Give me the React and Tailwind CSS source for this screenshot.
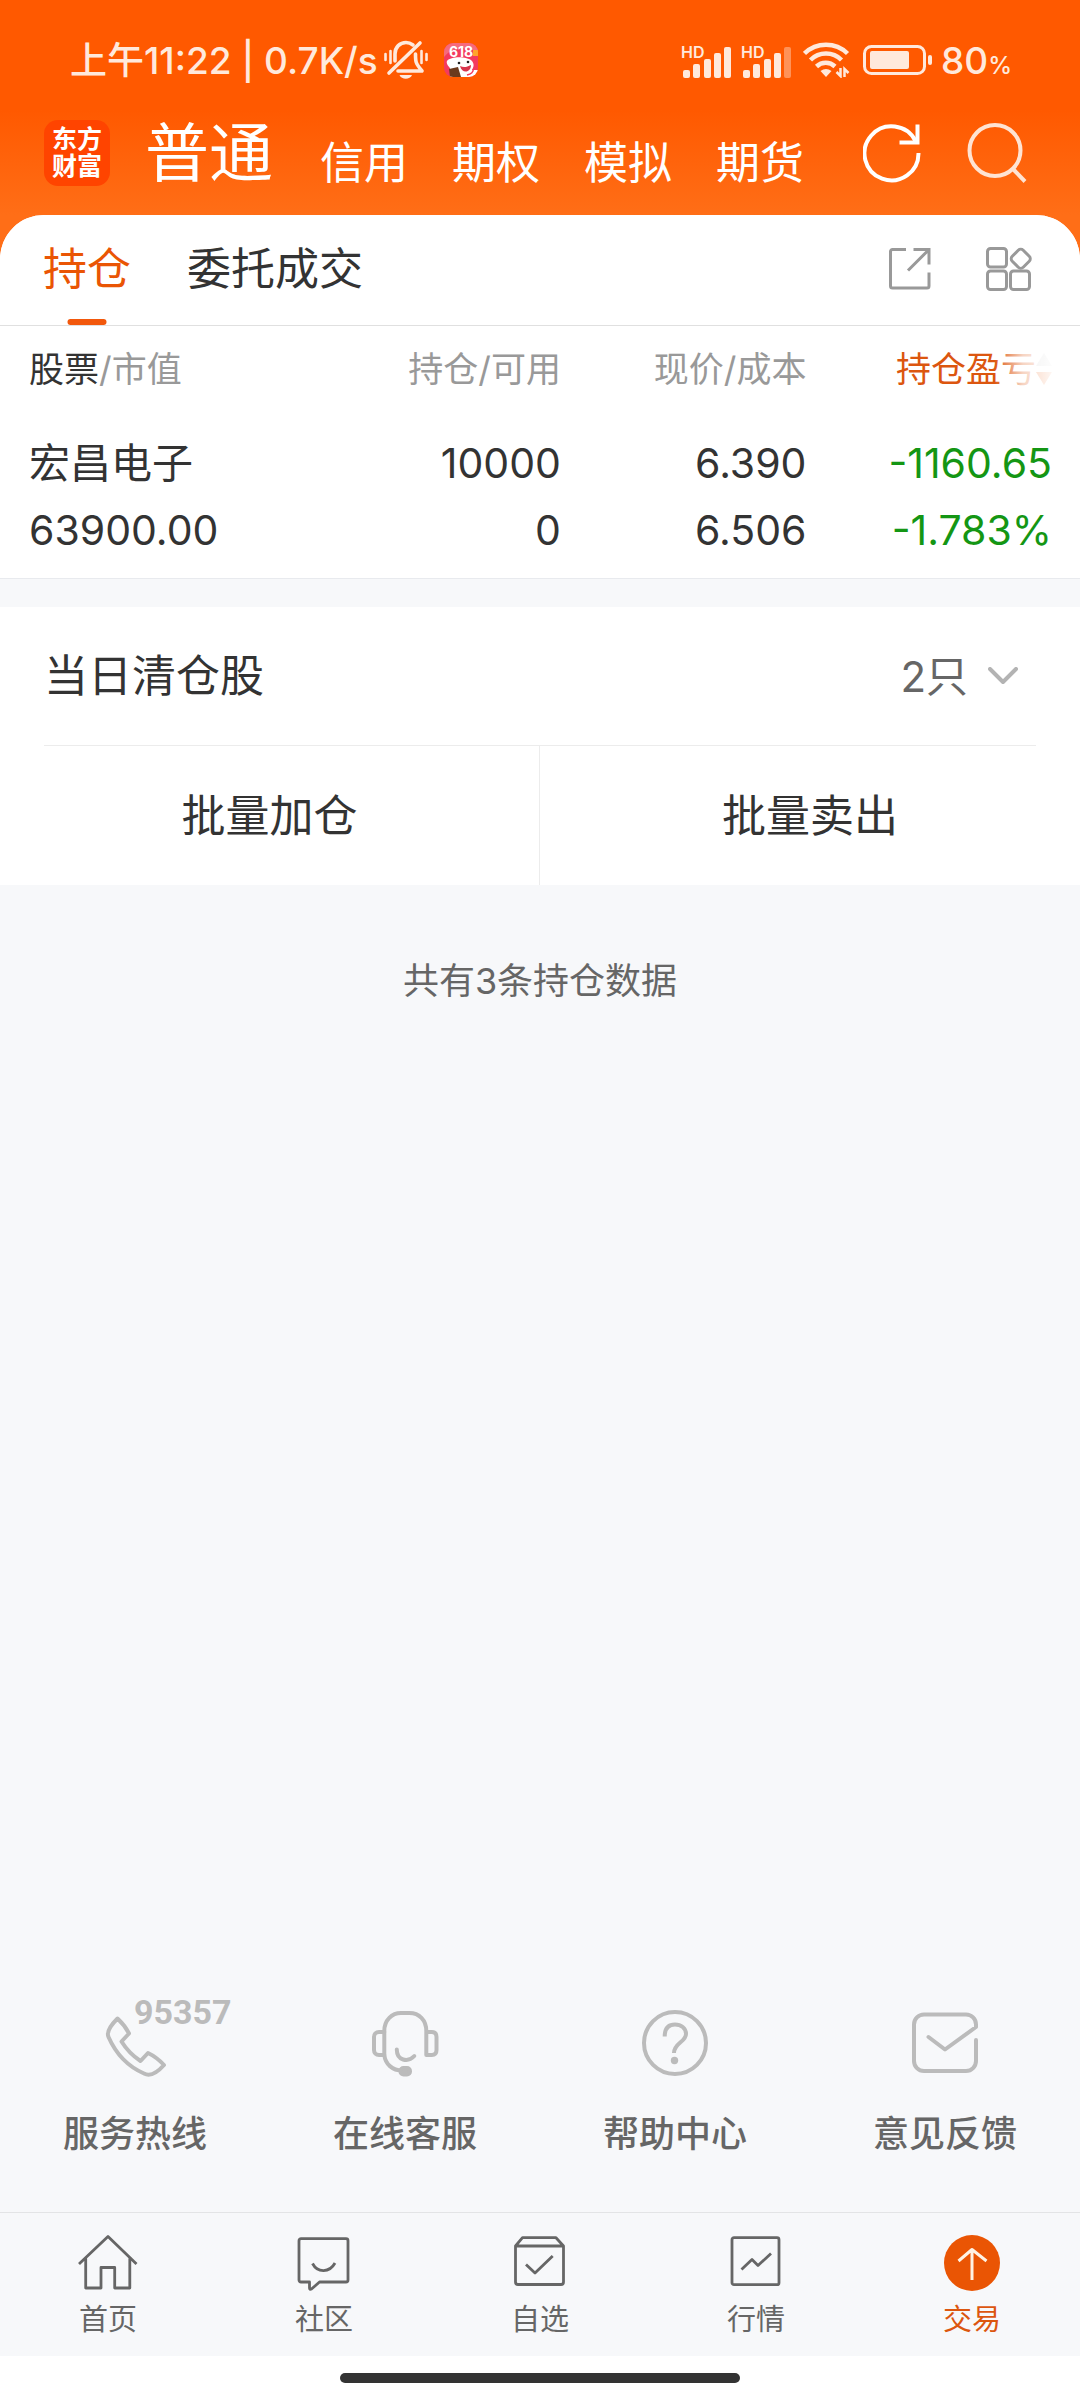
import { useState } from "react";

const accounts = ["信用", "期权", "模拟", "期货"];

const positions = [
  {
    name: "宏昌电子",
    value: "63900.00",
    amount: "10000",
    available: "0",
    price: "6.390",
    cost: "6.506",
    profit: "-1160.65",
    ratio: "-1.783%",
  },
];

const SignalIcon = ({ weak = false }) => (
  <svg width="50" height="42" viewBox="0 -6 50 42" fill="currentColor">
    <text x="0" y="13" fontSize="16" fontWeight="600">HD</text>
    <rect x="2" y="25" width="7" height="8" rx="2" />
    <rect x="12" y="19" width="7" height="14" rx="2" />
    <rect x="23" y="14" width="7" height="19" rx="2" />
    <rect x="33" y="8" width="7" height="25" rx="2" />
    <rect x="43" y="2" width="7" height="31" rx="2" opacity={weak ? 0.4 : 1} />
  </svg>
);

const StatusBar = () => (
  <div className="flex h-[106px] items-center justify-between pt-3.5 pl-[70px] pr-[68px] text-[37px] font-medium leading-none text-[#ffe9dc]">
    <div className="flex items-center">
      <span>上午11:22 | 0.7K/s</span>
      <svg className="ml-1.5" width="44" height="40" viewBox="0 0 44 40" fill="none" stroke="currentColor" strokeWidth="3.6" strokeLinecap="round" strokeLinejoin="round">
        <path d="M36 3L5 33" />
        <path d="M11 21v-7C11 7 16 2.500 22 2.500c3 0 5 1 7 2.500" />
        <path d="M31.500 14c0 8 0 9 6.500 17H14" />
        <path d="M15.500 35h12.500c-2 5-10.500 5-12.500 0z" fill="currentColor" stroke="none" />
        <path strokeWidth="2.600" d="M1.500 14v6M6.500 11v12M37.500 11v12M42.500 14v6" />
      </svg>
      {/* 618 promo notification */}
      <svg className="ml-4 rounded-[9px]" width="34" height="34" viewBox="0 0 34 34">
        <rect width="34" height="34" fill="#f43a5e" />
        <path d="M0 14C8 4 24 2 34 10V0H0z" fill="#f66a7c" />
        <rect x="29" y="7" width="5" height="6" fill="#ffa42b" />
        <text x="17" y="14" fontSize="14" fontWeight="700" fill="#fff" textAnchor="middle">618</text>
        <path d="M3 18c4-5 20-5 25 0 3 4 1 7 0 9h6v7H6v-9c-2-2-4-5-3-7z" fill="#fff" />
        <circle cx="15" cy="20" r="1.300" fill="#222" />
        <circle cx="24" cy="19" r="1.300" fill="#222" />
        <path d="M16 23c4 2 7 1 11-1 0 8-9 9-11 1z" fill="#d8344c" />
        <path d="M5 26l9-2 3 10H6z" fill="#6b3a1d" />
        <path d="M29 26c1 3-2 5-6 6" fill="none" stroke="#f43a5e" strokeWidth="1.500" />
      </svg>
    </div>

    <div className="flex items-center">
      <SignalIcon />
      <span className="ml-2.5 flex"><SignalIcon weak /></span>
      <svg className="ml-3" width="48" height="36" viewBox="0 0 48 36" fill="none" stroke="currentColor" strokeWidth="4.500">
        <path d="M1.500 11.500A31 31 0 0 1 44.500 11.500" />
        <path d="M7.500 18A22 22 0 0 1 38.500 18" />
        <path d="M13.500 24.500A13.500 13.500 0 0 1 32 24.500" />
        <path d="M17.500 29q5.500-4 11 0L23 35z" fill="currentColor" stroke="none" />
        <path strokeWidth="2.500" d="M37.500 26v8l-4-4M41.500 35v-8l4 4" />
      </svg>
      <svg className="ml-3" width="70" height="30" viewBox="0 0 70 30" fill="currentColor">
        <rect x="1.500" y="1.500" width="60" height="27" rx="7" fill="none" stroke="currentColor" strokeWidth="3" />
        <rect x="7" y="6" width="39" height="18" rx="2" />
        <rect x="65" y="10" width="4" height="10" rx="2" />
      </svg>
      <span className="ml-2">80<span className="text-[24px]">%</span></span>
    </div>
  </div>
);

const AccountBar = () => (
  <header className="flex h-[94px] items-center pl-11 pr-[53px] text-white">
    <div className="flex h-[66px] w-[66px] flex-col items-center justify-center rounded-[14px] bg-[#ff4400] text-[25px] font-bold leading-[27px]">
      <span>东方</span>
      <span>财富</span>
    </div>
    <nav className="ml-[35px] flex items-end gap-11 text-[44px] leading-none">
      <a href="#normal" className="mr-[3px] text-[64px]">普通</a>
      {accounts.map((item) => (
        <a key={item} href="#account">{item}</a>
      ))}
    </nav>
    <button type="button" aria-label="刷新" className="ml-auto">
      <svg width="58" height="60" viewBox="0 0 58 60" fill="none" stroke="currentColor" strokeWidth="4">
        <path d="M55.500 30A27 27 0 1 1 52.500 18" />
        <path d="M54.500 1.500v18H36.500" />
      </svg>
    </button>
    <button type="button" aria-label="搜索" className="ml-[46px] text-[#ffe3d2]">
      <svg width="60" height="60" viewBox="0 0 60 60" fill="none" stroke="currentColor" strokeWidth="4">
        <circle cx="28" cy="27.500" r="25.500" />
        <path d="M45.500 45.500L58 58.500" />
      </svg>
    </button>
  </header>
);

const PageTabs = () => (
  <div className="flex h-[111px] items-stretch border-b border-[#e0e0e0] pl-[43px] pr-[47px] text-[44px] text-[#333333]">
    <a href="#positions" className="relative flex items-center pb-0.5 text-[#ea5504]">
      持仓
      <span className="absolute bottom-0 left-1/2 h-1.5 w-[39px] -translate-x-1/2 rounded-full bg-[#f2580c]"></span>
    </a>
    <a href="#orders" className="ml-14 flex items-center pb-0.5">委托成交</a>
    <div className="ml-auto flex items-center gap-[53px] pb-0.5 text-[#999999]">
      <button type="button" aria-label="分享">
        <svg width="44" height="44" viewBox="0 0 44 44" fill="none" stroke="currentColor" strokeWidth="3">
          <path d="M18 2.500H4.500a2 2 0 0 0-2 2v34.500a2 2 0 0 0 2 2H39a2 2 0 0 0 2-2V25.500" />
          <path d="M25.500 2.500H41v15M41 2.500L20 23.500" />
        </svg>
      </button>
      <button type="button" aria-label="更多功能">
        <svg width="48" height="46" viewBox="0 0 48 46" fill="none" stroke="currentColor" strokeWidth="3">
          <rect x="2.500" y="2.500" width="19" height="18.500" rx="3" />
          <rect x="2.500" y="25" width="19" height="18.500" rx="3" />
          <rect x="25.500" y="25" width="19" height="18.500" rx="3" />
          <rect x="28" y="5" width="15.500" height="15.500" rx="3.500" transform="rotate(45 35.750 12.750)" />
        </svg>
      </button>
    </div>
  </div>
);

const PositionTable = () => (
  <div className="border-b border-[#e8eaee] pl-[29px] pr-7">
    <table className="w-full table-fixed text-right">
      <thead>
        <tr className="h-[86px] text-[35px] text-[#999999]">
          <th className="text-left font-normal"><span className="text-[#333333]">股票</span>/市值</th>
          <th className="w-[24%] font-normal">持仓/可用</th>
          <th className="w-[24%] font-normal">现价/成本</th>
          <th className="w-[24%] font-normal text-[#dc560f]">
            <div className="relative flex items-center justify-end">
              持仓盈亏
              <svg width="16" height="34" viewBox="0 0 16 34">
                <path d="M8 1l8 13H0z" fill="#cccccc" />
                <path d="M0 20h16L8 33z" fill="#ea5504" />
              </svg>
              <span className="absolute inset-y-0 right-0 w-[58px] bg-linear-to-r from-transparent via-white/75 to-white/95"></span>
            </div>
          </th>
        </tr>
      </thead>
      <tbody>
        {positions.map((row) => (
          <tr key={row.name} className="text-[41px] leading-[67px] text-[#333333]">
            <td className="pt-[18px] pb-[14px] text-left">
              <div>{row.name}</div>
              <div>{row.value}</div>
            </td>
            <td className="pt-[18px] pb-[14px]">
              <div>{row.amount}</div>
              <div>{row.available}</div>
            </td>
            <td className="pt-[18px] pb-[14px]">
              <div>{row.price}</div>
              <div>{row.cost}</div>
            </td>
            <td className="pt-[18px] pb-[14px] text-[#149614]">
              <div>{row.profit}</div>
              <div>{row.ratio}</div>
            </td>
          </tr>
        ))}
      </tbody>
    </table>
  </div>
);

const services = [
  {
    label: "服务热线",
    badge: "95357",
    icon: (
      <path d="M15.500 7.500Q23 14.500 27 22.500L19.500 30.500Q27 42.500 38.500 50L46 42Q54.500 46 62 54Q50.500 67 42 62.500Q18 52 6.500 26Q3.500 19.500 15.500 7.500z" />
    ),
  },
  {
    label: "在线客服",
    icon: (
      <>
        <path d="M12.300 44V20C12.300 9 20 2 29 2h8.500C47 2 54.300 9 54.300 20v24h5.500c3 0 4.700-2 4.700-5V26c0-3-1.700-5-4.700-5h-5.500" />
        <path d="M12.300 21H7c-3 0-5 2-5 5v13c0 3 2 5 5 5h5.300c1 9 8 15.500 18 15.500" />
        <rect x="28.500" y="57" width="9.500" height="6.500" rx="3" fill="currentColor" />
        <path d="M24.800 38.500c0 11 11 13.500 17.500 6.500" />
      </>
    ),
  },
  {
    label: "帮助中心",
    icon: (
      <>
        <circle cx="33" cy="32" r="31" />
        <path strokeLinecap="butt" d="M22.700 25.500C22.700 17 27 13.500 33 13.500S44 17 44 23c0 8-12 9-12 19" />
        <circle cx="32.500" cy="49.500" r="3.700" fill="currentColor" stroke="none" />
      </>
    ),
  },
  {
    label: "意见反馈",
    icon: (
      <path d="M16.500 26L33 38.500L64 16V13.500a10 10 0 0 0-10-10H12a10 10 0 0 0-10 10V50a10 10 0 0 0 10 10h42a10 10 0 0 0 10-10V29" />
    ),
  },
];

const Services = () => (
  <div className="mt-auto grid grid-cols-4 pb-[60px]">
    {services.map((item) => (
      <a key={item.label} href="#service" className="flex flex-col items-center gap-[39px] text-[36px] font-medium leading-none text-[#666666]">
        <span className="relative text-[#bbbbbb]">
          <svg width="66" height="66" viewBox="0 0 66 66" fill="none" stroke="currentColor" strokeWidth="4" strokeLinecap="round" strokeLinejoin="round" overflow="visible">
            {item.icon}
          </svg>
          {item.badge && (
            <span className="absolute -top-4 left-8 font-['Roboto'] text-[34px] font-bold leading-none">{item.badge}</span>
          )}
        </span>
        {item.label}
      </a>
    ))}
  </div>
);

const menu = [
  {
    label: "首页",
    icon: <path d="M1 31L30 3.500L58.500 31M7.700 25.500v29.500h15.300V34.500h13.700V55h15.100V25.500" />,
  },
  {
    label: "社区",
    icon: (
      <>
        <path d="M7 5.700h45a2 2 0 0 1 2 2V47a2 2 0 0 1-2 2H25.500l-8 7q-2 1-2-1V49H7a2 2 0 0 1-2-2V7.700a2 2 0 0 1 2-2z" />
        <path d="M18.500 30.500c5 9.500 17 9.500 22.500-0.500" />
      </>
    ),
  },
  {
    label: "自选",
    icon: (
      <>
        <path d="M5.500 13L12.500 4.700H46L53.500 13v36a2.500 2.500 0 0 1-2.500 2.500H8A2.500 2.500 0 0 1 5.500 49zM5.500 13h48" />
        <path d="M16 31.500l9 8.500L42.700 23" />
      </>
    ),
  },
  {
    label: "行情",
    icon: (
      <>
        <rect x="6" y="4.700" width="47" height="47" rx="2" />
        <path d="M15.500 36.500L26 26.500l6 6L45 20.500" />
      </>
    ),
  },
  {
    label: "交易",
    active: true,
    icon: (
      <>
        <circle cx="30" cy="30" r="28" fill="#ea5504" stroke="none" />
        <path d="M30 47V16.500M16.500 28L30 16.500L44.500 28" stroke="#fff3e4" strokeWidth="3" />
      </>
    ),
  },
];

const TabBar = () => (
  <nav className="grid grid-cols-5 border-t border-[#e3e4e6] bg-[#f7f8fa] pt-5 pb-[21px]">
    {menu.map((item) => (
      <a
        key={item.label}
        href="#menu"
        className={`flex flex-col items-center gap-3 text-[29px] leading-[30px] ${item.active ? "text-[#dc560f]" : "text-[#666666]"}`}
      >
        <svg width="60" height="60" viewBox="0 0 60 60" fill="none" stroke="currentColor" strokeWidth="2.800" strokeLinejoin="round">
          {item.icon}
        </svg>
        {item.label}
      </a>
    ))}
  </nav>
);

const App = () => {
  const [open, setOpen] = useState(false);

  return (
    <div className="flex min-h-screen flex-col bg-[linear-gradient(#ff5900_110px,#ff6e17_215px)] font-['Inter','Noto_Sans_CJK_SC',sans-serif]">
      <StatusBar />
      <AccountBar />

      <main className="mt-[15px] flex flex-1 flex-col overflow-hidden rounded-t-[44px] bg-[#f7f8fa]">
        <section className="bg-white">
          <PageTabs />
          <PositionTable />
        </section>

        <section className="mt-7 bg-white text-[44px] text-[#333333]">
          <div className="px-11">
            <button
              type="button"
              aria-expanded={open}
              onClick={() => setOpen(!open)}
              className="flex h-[139px] w-full items-center border-b border-[#ececec] pr-[18px]"
            >
              当日清仓股
              <span className="ml-auto text-[42px] text-[#666666]">2只</span>
              <svg className="ml-5" width="30" height="18" viewBox="0 0 30 18" fill="none" stroke="#b3b3b3" strokeWidth="4" strokeLinecap="round" strokeLinejoin="round">
                <path d="M2 2l13 13L28 2" />
              </svg>
            </button>
          </div>
          <div className="grid h-[139px] grid-cols-2">
            <button type="button" className="border-r border-[#ececec]">批量加仓</button>
            <button type="button">批量卖出</button>
          </div>
        </section>

        <p className="mt-[78px] text-center text-[36px] leading-none text-[#666666]">共有3条持仓数据</p>

        <Services />
      </main>

      <TabBar />
      <div className="flex h-11 items-center justify-center bg-white">
        <span className="h-2.5 w-[37%] rounded-full bg-[#333333]"></span>
      </div>
    </div>
  );
};

export default App;
